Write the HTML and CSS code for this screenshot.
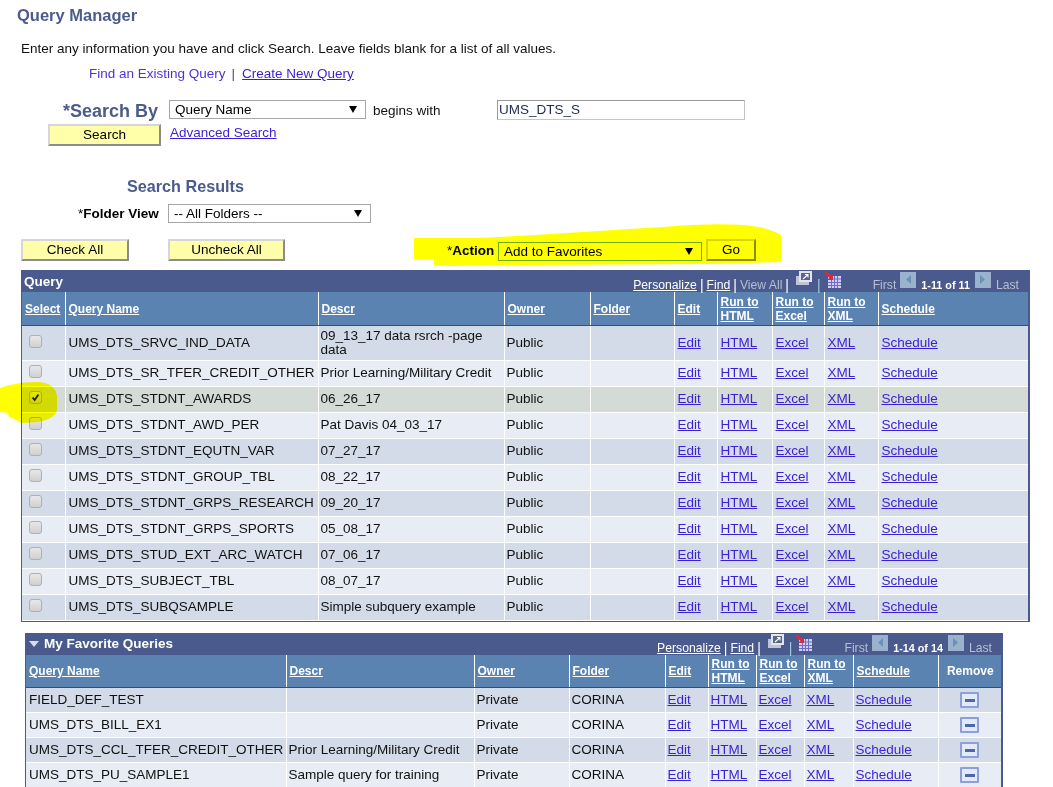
FILE: index.html
```html
<!DOCTYPE html>
<html lang="en">
<head>
<meta charset="utf-8">
<title>Query Manager</title>
<link rel="stylesheet" href="styles.css">
</head>
<body>
<svg class="hl hl-action" viewBox="0 0 368 42" aria-hidden="true"><path d="M0 14 L62 14 C120 12 190 6 250 3 C285 0 320 -1 345 3 C355 5 362 8 367 11 L367 38 L300 40 L120 41 L36 42 L20 41 L20 35 L0 35 Z" fill="#ffff00"/></svg>
<svg class="hl hl-check" viewBox="0 0 57 41" aria-hidden="true"><path d="M0 6 C8 3 22 0 36 0 C50 0 56 6 57 14 L57 28 C55 36 46 38 38 40 L22 41 L14 37 L9 35 L8 31 L0 30 Z" fill="#ffff00"/></svg>
<main class="page">
  <h1 class="title">Query Manager</h1>
  <p class="intro">Enter any information you have and click Search. Leave fields blank for a list of all values.</p>
  <div class="tabs"><span class="tab-current">Find an Existing Query</span><span class="tab-sep">|</span><a href="#">Create New Query</a></div>

  <div class="search">
    <div class="search-row">
      <label class="search-label"><span class="req">*</span>Search By</label>
      <span class="sel sel-name"><select><option>Query Name</option></select></span>
      <span class="begins">begins with</span>
      <input class="text" type="text" value="UMS_DTS_S">
    </div>
    <div class="search-row2">
      <button class="btn btn-search">Search</button>
      <a href="#">Advanced Search</a>
    </div>
  </div>

  <h2 class="results">Search Results</h2>
  <div class="folder-row">
    <label class="folder-label"><span class="req">*</span>Folder View</label>
    <span class="sel sel-folder"><select><option>-- All Folders --</option></select></span>
  </div>
  <div class="action-row">
    <button class="btn btn-check">Check All</button>
    <button class="btn btn-uncheck">Uncheck All</button>
    <label class="action-label"><span>*</span>Action</label>
    <span class="sel sel-action"><select><option>Add to Favorites</option></select></span>
    <button class="btn btn-go">Go</button>
  </div>

  <section class="grid grid-query">
    <div class="bar">
      <span class="bar-title">Query</span>
      <div class="nav">
        <a href="#">Personalize</a><i>|</i><a href="#">Find</a><i>|</i><span class="dim">View All</span><i>|</i>
        <svg class="ic" viewBox="0 0 16 16" width="16" height="16"><use href="#i-popup"/></svg><i class="pipe">|</i>
        <svg class="ic ic-grid" viewBox="0 0 16 16" width="16" height="16"><use href="#i-grid"/></svg>
        <span class="dim first">First</span>
        <svg class="pg pg-prev" viewBox="0 0 16 16" width="16" height="16"><use href="#i-prev"/></svg>
        <b>1-11 of 11</b>
        <svg class="pg" viewBox="0 0 16 16" width="16" height="16"><use href="#i-next"/></svg>
        <span class="dim">Last</span>
      </div>
    </div>
    <table>
      <colgroup><col class="q1"><col class="q2"><col class="q3"><col class="q4"><col class="q5"><col class="q6"><col class="q7"><col class="q8"><col class="q9"><col class="q10"></colgroup>
      <thead><tr>
        <th><a href="#">Select</a></th><th><a href="#">Query Name</a></th><th><a href="#">Descr</a></th><th><a href="#">Owner</a></th><th><a href="#">Folder</a></th><th><a href="#">Edit</a></th><th><a href="#">Run to HTML</a></th><th><a href="#">Run to Excel</a></th><th><a href="#">Run to XML</a></th><th><a href="#">Schedule</a></th>
      </tr></thead>
      <tbody>
        <tr class="tall"><td class="c"><input type="checkbox"></td><td>UMS_DTS_SRVC_IND_DATA</td><td class="wrap">09_13_17 data rsrch -page data</td><td>Public</td><td></td><td><a href="#">Edit</a></td><td><a href="#">HTML</a></td><td><a href="#">Excel</a></td><td><a href="#">XML</a></td><td><a href="#">Schedule</a></td></tr>
        <tr><td class="c"><input type="checkbox"></td><td>UMS_DTS_SR_TFER_CREDIT_OTHER</td><td>Prior Learning/Military Credit</td><td>Public</td><td></td><td><a href="#">Edit</a></td><td><a href="#">HTML</a></td><td><a href="#">Excel</a></td><td><a href="#">XML</a></td><td><a href="#">Schedule</a></td></tr>
        <tr class="sel-row"><td class="c"><input type="checkbox" checked></td><td>UMS_DTS_STDNT_AWARDS</td><td>06_26_17</td><td>Public</td><td></td><td><a href="#">Edit</a></td><td><a href="#">HTML</a></td><td><a href="#">Excel</a></td><td><a href="#">XML</a></td><td><a href="#">Schedule</a></td></tr>
        <tr><td class="c"><input type="checkbox"></td><td>UMS_DTS_STDNT_AWD_PER</td><td>Pat Davis 04_03_17</td><td>Public</td><td></td><td><a href="#">Edit</a></td><td><a href="#">HTML</a></td><td><a href="#">Excel</a></td><td><a href="#">XML</a></td><td><a href="#">Schedule</a></td></tr>
        <tr><td class="c"><input type="checkbox"></td><td>UMS_DTS_STDNT_EQUTN_VAR</td><td>07_27_17</td><td>Public</td><td></td><td><a href="#">Edit</a></td><td><a href="#">HTML</a></td><td><a href="#">Excel</a></td><td><a href="#">XML</a></td><td><a href="#">Schedule</a></td></tr>
        <tr><td class="c"><input type="checkbox"></td><td>UMS_DTS_STDNT_GROUP_TBL</td><td>08_22_17</td><td>Public</td><td></td><td><a href="#">Edit</a></td><td><a href="#">HTML</a></td><td><a href="#">Excel</a></td><td><a href="#">XML</a></td><td><a href="#">Schedule</a></td></tr>
        <tr><td class="c"><input type="checkbox"></td><td>UMS_DTS_STDNT_GRPS_RESEARCH</td><td>09_20_17</td><td>Public</td><td></td><td><a href="#">Edit</a></td><td><a href="#">HTML</a></td><td><a href="#">Excel</a></td><td><a href="#">XML</a></td><td><a href="#">Schedule</a></td></tr>
        <tr><td class="c"><input type="checkbox"></td><td>UMS_DTS_STDNT_GRPS_SPORTS</td><td>05_08_17</td><td>Public</td><td></td><td><a href="#">Edit</a></td><td><a href="#">HTML</a></td><td><a href="#">Excel</a></td><td><a href="#">XML</a></td><td><a href="#">Schedule</a></td></tr>
        <tr><td class="c"><input type="checkbox"></td><td>UMS_DTS_STUD_EXT_ARC_WATCH</td><td>07_06_17</td><td>Public</td><td></td><td><a href="#">Edit</a></td><td><a href="#">HTML</a></td><td><a href="#">Excel</a></td><td><a href="#">XML</a></td><td><a href="#">Schedule</a></td></tr>
        <tr><td class="c"><input type="checkbox"></td><td>UMS_DTS_SUBJECT_TBL</td><td>08_07_17</td><td>Public</td><td></td><td><a href="#">Edit</a></td><td><a href="#">HTML</a></td><td><a href="#">Excel</a></td><td><a href="#">XML</a></td><td><a href="#">Schedule</a></td></tr>
        <tr><td class="c"><input type="checkbox"></td><td>UMS_DTS_SUBQSAMPLE</td><td>Simple subquery example</td><td>Public</td><td></td><td><a href="#">Edit</a></td><td><a href="#">HTML</a></td><td><a href="#">Excel</a></td><td><a href="#">XML</a></td><td><a href="#">Schedule</a></td></tr>
      </tbody>
    </table>
  </section>

  <section class="grid grid-fav">
    <div class="bar">
      <span class="bar-title"><svg class="caret" viewBox="0 0 10 6" width="10" height="6"><path d="M0 0H10L5 6Z" fill="#d8dce8"/></svg>My Favorite Queries</span>
      <div class="nav">
        <a href="#">Personalize</a><i>|</i><a href="#">Find</a><i>|</i>
        <svg class="ic" viewBox="0 0 16 16" width="16" height="16"><use href="#i-popup"/></svg><i class="pipe">|</i>
        <svg class="ic ic-grid" viewBox="0 0 16 16" width="16" height="16"><use href="#i-grid"/></svg>
        <span class="dim first">First</span>
        <svg class="pg pg-prev" viewBox="0 0 16 16" width="16" height="16"><use href="#i-prev"/></svg>
        <b>1-14 of 14</b>
        <svg class="pg" viewBox="0 0 16 16" width="16" height="16"><use href="#i-next"/></svg>
        <span class="dim">Last</span>
      </div>
    </div>
    <table>
      <colgroup><col class="f1"><col class="f2"><col class="f3"><col class="f4"><col class="f5"><col class="f6"><col class="f7"><col class="f8"><col class="f9"><col class="f10"></colgroup>
      <thead><tr>
        <th><a href="#">Query Name</a></th><th><a href="#">Descr</a></th><th><a href="#">Owner</a></th><th><a href="#">Folder</a></th><th><a href="#">Edit</a></th><th><a href="#">Run to HTML</a></th><th><a href="#">Run to Excel</a></th><th><a href="#">Run to XML</a></th><th><a href="#">Schedule</a></th><th class="c">Remove</th>
      </tr></thead>
      <tbody>
        <tr><td>FIELD_DEF_TEST</td><td></td><td>Private</td><td>CORINA</td><td><a href="#">Edit</a></td><td><a href="#">HTML</a></td><td><a href="#">Excel</a></td><td><a href="#">XML</a></td><td><a href="#">Schedule</a></td><td class="c"><button class="rm" aria-label="Remove"></button></td></tr>
        <tr><td>UMS_DTS_BILL_EX1</td><td></td><td>Private</td><td>CORINA</td><td><a href="#">Edit</a></td><td><a href="#">HTML</a></td><td><a href="#">Excel</a></td><td><a href="#">XML</a></td><td><a href="#">Schedule</a></td><td class="c"><button class="rm" aria-label="Remove"></button></td></tr>
        <tr><td>UMS_DTS_CCL_TFER_CREDIT_OTHER</td><td>Prior Learning/Military Credit</td><td>Private</td><td>CORINA</td><td><a href="#">Edit</a></td><td><a href="#">HTML</a></td><td><a href="#">Excel</a></td><td><a href="#">XML</a></td><td><a href="#">Schedule</a></td><td class="c"><button class="rm" aria-label="Remove"></button></td></tr>
        <tr><td>UMS_DTS_PU_SAMPLE1</td><td>Sample query for training</td><td>Private</td><td>CORINA</td><td><a href="#">Edit</a></td><td><a href="#">HTML</a></td><td><a href="#">Excel</a></td><td><a href="#">XML</a></td><td><a href="#">Schedule</a></td><td class="c"><button class="rm" aria-label="Remove"></button></td></tr>
      </tbody>
    </table>
  </section>
</main>
<svg class="defs" width="0" height="0" aria-hidden="true">
  <defs>
    <g id="i-popup">
      <rect x="0" y="5" width="13" height="9" fill="#bfc5d6"/>
      <rect x="3" y="0" width="13" height="11" fill="#e1e5ef"/>
      <rect x="5" y="2" width="9" height="7" fill="#5a6488"/>
      <path d="M7 8 L12 3.5 M9 3.5H12V6.5" stroke="#fff" stroke-width="1.1" fill="none"/>
    </g>
    <g id="i-grid">
      <rect x="3" y="4" width="13" height="12" fill="#cfcff6"/>
      <path d="M3 7H16M3 10.5H16M3 13.5H16M6.5 4V16M9.5 4V16M12.5 4V16" stroke="#6f6cc8" stroke-width="1"/>
      <path d="M0 0 L2 0 L7 4 L8 2 L8 8 L2.5 8 L4.5 6 L0 2Z" fill="#d92b3a"/>
    </g>
    <g id="i-prev"><rect width="16" height="16" fill="#9ab2cd"/><path d="M11 3V12L6 7.5Z" fill="#6c91b8"/></g>
    <g id="i-next"><rect width="16" height="16" fill="#9ab2cd"/><path d="M5 3V12L10 7.5Z" fill="#6c91b8"/></g>
  </defs>
</svg>
</body>
</html>
```
FILE: styles.css
```css
html { overflow: hidden; height: 787px; }
body { margin: 0; background: #fff; font-family: "Liberation Sans", Arial, sans-serif; font-size: 13.5px; color: #000; position: relative; height: 787px; overflow: hidden; }
a { color: #3b1fd0; text-decoration: underline; }
.page { position: relative; padding-top: 7px; }
.defs { position: absolute; }

.hl { position: absolute; display: block; mix-blend-mode: multiply; z-index: 3; }
.hl-action { left: 414px; top: 224px; width: 368px; height: 42px; }
.hl-check { left: 0; top: 382px; width: 57px; height: 41px; }

.title { margin: 0 0 0 17px; font-size: 16.5px; line-height: 17px; font-weight: bold; color: #4b5c8c; }
.intro { margin: 17px 0 0 21px; line-height: 16px; color: #111; }
.tabs { margin: 9px 0 0 89px; line-height: 16px; display: flex; }
.tab-current { color: #4b34d4; }
.tab-sep { margin: 0 7px 0 6px; color: #33508c; }

.search { margin-top: 18px; }
.search-row { display: flex; align-items: flex-start; padding-left: 63px; height: 24px; }
.search-label { width: 95px; font-size: 18px; line-height: 22px; font-weight: bold; color: #4b5c8c; white-space: nowrap; }
.req { font-weight: bold; }
.folder-label .req, .action-label span { font-weight: normal; }
.sel { display: inline-block; position: relative; height: 19px; }
.sel select { appearance: none; display: block; width: 100%; height: 100%; margin: 0; padding: 0 0 1px 5px; border: 1px solid #a6a6a6; border-radius: 0; background: #fff; font: 13.5px "Liberation Sans", Arial, sans-serif; color: #000; }
.sel::after { content: ""; position: absolute; right: 9px; top: 6px; border-left: 4px solid transparent; border-right: 4px solid transparent; border-top: 7px solid #000; }
.sel-name { width: 197px; margin-left: 11px; }
.begins { margin: 3px 0 0 7px; width: 124px; color: #111; }
.text { box-sizing: border-box; width: 248px; height: 20px; margin: 0; padding: 0 0 1px 1px; border: 1px solid #c6c6c6; border-top-color: #9a9a9a; border-left-color: #9a9a9a; font: 13.5px "Liberation Sans", Arial, sans-serif; color: #1c2c50; }
.search-row2 { display: flex; align-items: flex-start; padding-left: 48px; }
.search-row2 a { margin: 1px 0 0 9px; line-height: 16px; }

.btn { box-sizing: border-box; height: 22px; margin: 0; padding: 0 0 1px; background: #ffffaa; border: 2px solid; border-color: #d6d6d6 #8c8c8c #8c8c8c #d6d6d6; font: 13.5px "Liberation Sans", Arial, sans-serif; color: #000; }
.btn-search { width: 113px; }

.results { margin: 31px 0 0 127px; font-size: 16.2px; line-height: 18px; font-weight: bold; color: #4b5c8c; }
.folder-row { display: flex; margin-top: 9px; height: 19px; }
.folder-label { margin-left: 78px; width: 90px; font-weight: bold; line-height: 20px; white-space: nowrap; }
.sel-folder { width: 203px; }

.action-row { display: flex; align-items: flex-start; margin-top: 16px; height: 22px; }
.btn-check { width: 108px; margin-left: 21px; }
.btn-uncheck { width: 117px; margin-left: 39px; }
.action-label { margin: 4px 0 0 162px; width: 49px; font-weight: bold; white-space: nowrap; line-height: 16px; }
.sel-action { width: 204px; margin: 3px 0 0 2px; }
.sel-action select { border-color: #6fae00; }
.btn-go { width: 50px; margin-left: 4px; }

.grid { background: #4a5a8c; box-sizing: border-box; }
.grid-query { margin: 9px 0 0 21px; width: 1009px; padding: 0 2px 1px 1px; }
.grid-fav { margin: 11px 0 0 25px; width: 978px; padding: 0 2px 0 1px; }
.bar { display: flex; justify-content: space-between; align-items: flex-end; height: 22px; color: #fff; }
.bar-title { font-weight: bold; align-self: center; padding-left: 2px; }
.grid-fav .bar-title { padding-left: 3px; display: flex; align-items: center; }
.caret { margin-right: 5px; }
.nav { display: flex; align-items: flex-end; font-size: 12.2px; line-height: 14px; color: #fff; padding: 0 9px 0 0; }
.nav a { color: #fff; }
.nav i { font-style: normal; font-size: 14px; margin: 0 3px; }
.nav .dim { color: #b4bfd4; }
.nav .first { margin-left: 32px; }
.nav .ic { margin-bottom: 5px; margin-left: 4px; }
.nav .ic-grid { margin-left: 2px; margin-bottom: 4px; }
.nav .pipe { color: #9ecbe4; margin: 0 2px 0 5px; }
.nav .pg { margin: 0 5px 4px; }
.nav .pg-prev { margin-left: 4px; }
.nav b { font-size: 10.8px; }

table { border-collapse: collapse; table-layout: fixed; width: 100%; }
th { background: #5b83b2; color: #fff; font-weight: bold; font-size: 12px; line-height: 14px; text-align: left; padding: 1px 2px 0 3px; border: 1px solid #fff; border-bottom: 1px solid #2e4f80; border-top-color: #c8d4e4; }
th a { color: #fff; }
td { padding: 0 2px 0 3px; border: 1px solid #fff; line-height: 14px; color: #111; overflow: hidden; white-space: nowrap; }
td.wrap { white-space: normal; }
.grid-query td:nth-child(3), .grid-query td:nth-child(4), .grid-fav td:nth-child(n+2) { padding-left: 2px; }
td.c, th.c { text-align: center; }
tbody tr:nth-child(odd) td { background: #d3dbe8; }
tbody tr:nth-child(even) td { background: #e7ecf5; }
tbody tr.sel-row td { background: #d4dad6; }
table tr:first-child th { border-top: 0; }
th:first-child, td:first-child { border-left: 0; }
th:last-child, td:last-child { border-right: 0; }

.grid-query thead tr { height: 33px; }
.grid-query tbody tr { height: 26px; }
.grid-query tbody tr.tall { height: 35px; }
.grid-fav thead tr { height: 33px; }
.grid-fav tbody tr { height: 25px; }

.q1 { width: 43px; } .q2 { width: 253px; } .q3 { width: 186px; } .q4 { width: 86px; } .q5 { width: 84px; }
.q6 { width: 43px; } .q7 { width: 55px; } .q8 { width: 52px; } .q9 { width: 54px; } .q10 { width: 150px; }
.f1 { width: 260px; } .f2 { width: 188px; } .f3 { width: 95px; } .f4 { width: 96px; } .f5 { width: 43px; }
.f6 { width: 48px; } .f7 { width: 48px; } .f8 { width: 49px; } .f9 { width: 85px; } .f10 { width: 63px; }

input[type="checkbox"] { appearance: none; display: block; box-sizing: border-box; width: 13px; height: 13px; margin: 0 auto 3px 4px; border: 1px solid #b0b0b0; border-radius: 3px; background: linear-gradient(#e8e8e8, #d0d0d0); }
input[type="checkbox"]:checked { background: url("data:image/svg+xml,%3Csvg xmlns='http://www.w3.org/2000/svg' viewBox='0 0 13 13'%3E%3Cpath d='M3 6.5L5.5 9.5L10 3' stroke='%23222' stroke-width='2.2' fill='none'/%3E%3C/svg%3E"), linear-gradient(#e8e8e8, #d0d0d0); }

.rm { display: block; box-sizing: border-box; width: 19px; height: 16px; margin: 0 auto; padding: 0; border: 2px solid #8d9fd8; border-radius: 1px; background: linear-gradient(#4f66ac, #4f66ac) center / 10px 3px no-repeat, #e2e9f8; }
```
